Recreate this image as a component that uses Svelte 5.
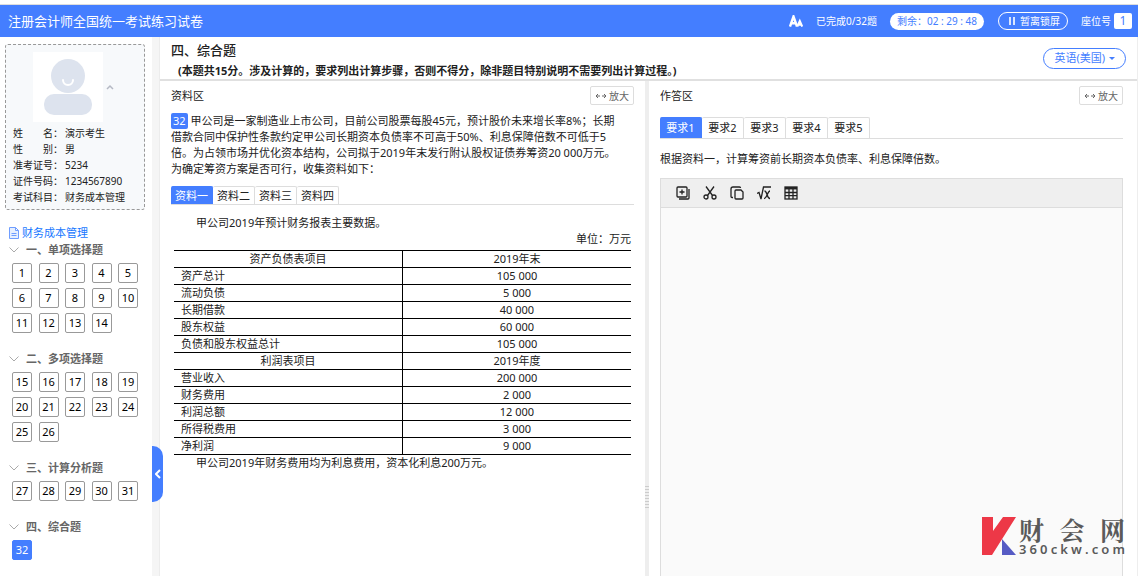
<script lang="ts">
	interface Section {
		title: string;
		from: number;
		to: number;
	}

	interface Row {
		name: string;
		value: string;
		head?: boolean;
	}

	const candidate = [
		{ label: ['姓', '名：'], value: '演示考生' },
		{ label: ['性', '别：'], value: '男' },
		{ label: ['准考证号：'], value: '5234' },
		{ label: ['证件号码：'], value: '1234567890' },
		{ label: ['考试科目：'], value: '财务成本管理' }
	];

	const sections: Section[] = [
		{ title: '一、单项选择题', from: 1, to: 14 },
		{ title: '二、多项选择题', from: 15, to: 26 },
		{ title: '三、计算分析题', from: 27, to: 31 },
		{ title: '四、综合题', from: 32, to: 32 }
	];

	const materials = ['资料一', '资料二', '资料三', '资料四'];
	const requirements = ['要求1', '要求2', '要求3', '要求4', '要求5'];

	const rows: Row[] = [
		{ name: '资产负债表项目', value: '2019年末', head: true },
		{ name: '资产总计', value: '105 000' },
		{ name: '流动负债', value: '5 000' },
		{ name: '长期借款', value: '40 000' },
		{ name: '股东权益', value: '60 000' },
		{ name: '负债和股东权益总计', value: '105 000' },
		{ name: '利润表项目', value: '2019年度', head: true },
		{ name: '营业收入', value: '200 000' },
		{ name: '财务费用', value: '2 000' },
		{ name: '利润总额', value: '12 000' },
		{ name: '所得税费用', value: '3 000' },
		{ name: '净利润', value: '9 000' }
	];

	let current = $state(32);
	let material = $state(0);
	let requirement = $state(0);

	function numbers(s: Section) {
		return Array.from({ length: s.to - s.from + 1 }, (_, i) => s.from + i);
	}
</script>

{#snippet zoomButton()}
	<button class="zoom-btn">
		<svg width="12" height="8" viewBox="0 0 12 8" fill="none" stroke="#666">
			<path d="M1 4h4M3 2L1 4l2 2M7 4h4M9 2l2 2-2 2" />
		</svg>
		放大
	</button>
{/snippet}

<div class="exam">
	<!-- Top bar -->
	<header class="topbar">
		<h1>注册会计师全国统一考试练习试卷</h1>
		<button class="font-btn" aria-label="字号">
			<svg width="14" height="12" viewBox="0 0 14 12" fill="none" stroke="#fff">
				<path stroke-width="2.400" d="M1 11.500L4.500 1.500L8 11.500M2.500 8.300h4" />
				<path stroke-width="2" d="M8.300 11.500L10.800 6L13.200 11.500M9 9.800h3.500" />
			</svg>
		</button>
		<span class="done">已完成0/32题</span>
		<span class="time">剩余：02 : 29 : 48</span>
		<button class="lock">
			<svg width="6" height="8" viewBox="0 0 6 8" fill="#fff">
				<rect x="0" y="0" width="2" height="8" opacity=".8" />
				<rect x="4" y="0" width="2" height="8" opacity=".8" />
			</svg>
			暂离锁屏
		</button>
		<span class="seat">座位号 <b>1</b></span>
	</header>

	<div class="body">
		<!-- Sidebar -->
		<aside class="sidebar">
			<div class="card">
				<div class="photo-row">
					<svg class="photo" width="70" height="70" viewBox="0 0 70 70">
						<rect width="70" height="70" fill="#fff" />
						<circle cx="35" cy="24" r="17" fill="#dde3ee" />
						<path d="M30 28a5 5 0 0 0 10 0" fill="none" stroke="#fff" stroke-width="2" stroke-linecap="round" />
						<rect x="11" y="42" width="48" height="21" rx="10" fill="#dde3ee" />
					</svg>
					<svg class="fold" width="8" height="6" viewBox="0 0 8 6" fill="none" stroke="#b5b9c4" stroke-width="1.500">
						<path d="M1 5l3-3 3 3" />
					</svg>
				</div>
				<dl>
					{#each candidate as c}
						<div class="info">
							<dt>
								{#each c.label as part}<span>{part}</span>{/each}
							</dt>
							<dd>{c.value}</dd>
						</div>
					{/each}
				</dl>
			</div>

			<a class="subject" href="#subject">
				<svg width="10" height="12" viewBox="0 0 10 12" fill="#e6efff" stroke="#6f9dff">
					<path d="M.5.5h6l3 3v8h-9zM6.500.5v3h3" />
					<path d="M2.500 6.500h5M2.500 8.500h5" />
				</svg>
				财务成本管理
			</a>

			{#each sections as s}
				<section class="group">
					<h2>
						<svg width="10" height="6" viewBox="0 0 10 6" fill="none" stroke="#aaa">
							<path d="M.5.5L5 5 9.500.5" />
						</svg>
						{s.title}
					</h2>
					<div class="numbers">
						{#each numbers(s) as n}
							<button class:active={n === current} onclick={() => (current = n)}>{n}</button>
						{/each}
					</div>
				</section>
			{/each}
		</aside>

		<div class="rail">
			<button class="collapse" aria-label="收起">
				<svg width="6" height="10" viewBox="0 0 6 10" fill="none" stroke="#fff" stroke-width="2">
					<path d="M5 1L1 5l4 4" />
				</svg>
			</button>
		</div>

		<main>
			<div class="intro">
				<div>
					<h2>四、综合题</h2>
					<p>(本题共15分。涉及计算的，要求列出计算步骤，否则不得分，除非题目特别说明不需要列出计算过程。)</p>
				</div>
				<button class="lang">
					英语(美国)
					<svg width="6" height="3" viewBox="0 0 6 3" fill="#447eff"><path d="M0 0h6L3 3z" /></svg>
				</button>
			</div>

			<div class="split">
				<!-- Materials -->
				<section class="pane">
					<div class="pane-head">
						<h3>资料区</h3>
						{@render zoomButton()}
					</div>
					<p class="question">
						<span class="badge">32</span>
						甲公司是一家制造业上市公司，目前公司股票每股45元，预计股价未来增长率8%；长期借款合同中保护性条款约定甲公司长期资本负债率不可高于50%、利息保障倍数不可低于5倍。为占领市场并优化资本结构，公司拟于2019年末发行附认股权证债券筹资20
						000万元。为确定筹资方案是否可行，收集资料如下：
					</p>
					<div class="tabs">
						{#each materials as m, i}
							<button class:active={i === material} onclick={() => (material = i)}>{m}</button>
						{/each}
					</div>
					<div class="material">
						<p class="indent">甲公司2019年预计财务报表主要数据。</p>
						<p class="unit">单位：万元</p>
						<table>
							<tbody>
								{#each rows as r}
									<tr>
										<td class:center={r.head}>{r.name}</td>
										<td class="center">{r.value}</td>
									</tr>
								{/each}
							</tbody>
						</table>
						<p class="indent">甲公司2019年财务费用均为利息费用，资本化利息200万元。</p>
					</div>
				</section>

				<div class="gutter"><span></span></div>

				<!-- Answer -->
				<section class="pane answer">
					<div class="pane-head">
						<h3>作答区</h3>
						{@render zoomButton()}
					</div>
					<div class="tabs tall">
						{#each requirements as r, i}
							<button class:active={i === requirement} onclick={() => (requirement = i)}>{r}</button>
						{/each}
					</div>
					<p class="task">根据资料一，计算筹资前长期资本负债率、利息保障倍数。</p>
					<div class="editor">
						<div class="toolbar">
							<button aria-label="复制">
								<svg width="14" height="14" viewBox="0 0 14 14" fill="none" stroke="#222" stroke-width="1.300">
									<rect x="1" y="1" width="10" height="10" rx="1" />
									<path d="M6 3.500v5M3.500 6h5M13 3v9a1 1 0 0 1-1 1H3" />
								</svg>
							</button>
							<button aria-label="剪切">
								<svg width="14" height="14" viewBox="0 0 14 14" fill="none" stroke="#222" stroke-width="1.300">
									<path d="M3 .5l6.500 9M11 .5l-6.500 9" />
									<circle cx="3" cy="11" r="2" />
									<circle cx="11" cy="11" r="2" />
								</svg>
							</button>
							<button aria-label="粘贴">
								<svg width="14" height="14" viewBox="0 0 14 14" fill="none" stroke="#222" stroke-width="1.300">
									<path d="M3 11.500H2a1 1 0 0 1-1-1V3a2 2 0 0 1 2-2h6.500a1 1 0 0 1 1 1" />
									<path d="M6 4h5l2 2v6a1 1 0 0 1-1 1H6a1 1 0 0 1-1-1V5a1 1 0 0 1 1-1z" />
								</svg>
							</button>
							<button aria-label="公式">
								<svg width="14" height="14" viewBox="0 0 14 14" fill="none" stroke="#222" stroke-width="1.300">
									<path d="M0 7.500l2-1L4 13 6.500 1H14M7.500 5c3 0 2 7.500 5.500 7.500M13 5c-2.500 0-3 7.500-6 7.500" />
								</svg>
							</button>
							<button aria-label="表格">
								<svg width="14" height="14" viewBox="0 0 14 14" fill="none" stroke="#222" stroke-width="1.300">
									<rect x="1" y="1" width="12" height="12" />
									<path stroke-width="2.500" d="M1 2.200h12" />
									<path d="M1 6.500h12M1 9.700h12M5 3v10M9 3v10" />
								</svg>
							</button>
						</div>
						<textarea aria-label="作答内容"></textarea>
					</div>
				</section>
			</div>
		</main>
	</div>

	<!-- Site mark -->
	<div class="mark">
		<svg width="34" height="38" viewBox="0 0 34 38">
			<path fill="#ed3847" d="M0 0h11v14L21 0h13L10 38H0z" />
			<path fill="#565bc4" d="M20 22l14 16H20z" />
		</svg>
		<div class="mark-text">
			<div class="mark-name">{#each '财会网' as ch}<span>{ch}</span>{/each}</div>
			<div class="mark-url">{#each '360ckw.com' as ch}<span>{ch}</span>{/each}</div>
		</div>
	</div>
</div>

<style>
	:global(body) {
		margin: 0;
	}

	.exam {
		display: flex;
		flex-direction: column;
		height: 100vh;
		overflow: hidden;
		position: relative;
		background: #fff;
		color: #212121;
		font-family: 'Noto Sans', 'Noto Sans CJK SC', sans-serif;
		font-size: 11px;
		line-height: 16px;
	}

	h1,
	h2,
	h3,
	p,
	dl,
	dd {
		margin: 0;
	}

	button {
		box-sizing: border-box;
		padding: 0;
		font: inherit;
		color: inherit;
		background: none;
		border: none;
		cursor: pointer;
		white-space: nowrap;
	}

	svg {
		flex-shrink: 0;
	}

	/* Top bar */
	.topbar {
		display: flex;
		align-items: center;
		flex-shrink: 0;
		height: 32px;
		margin-top: 4px;
		padding: 0 6px 0 8px;
		border-top: 1px solid #ddd;
		background: #447eff;
		color: #fff;
		font-size: 10px;
	}

	h1 {
		flex: 1;
		font-size: 13px;
		font-weight: 400;
	}

	.font-btn {
		display: flex;
		margin-right: 13px;
	}

	.time {
		margin: 0 14px 0 13px;
		padding: 0 7px;
		border-radius: 9px;
		background: #fff;
		color: #447eff;
		line-height: 17px;
	}

	.lock {
		display: flex;
		align-items: center;
		gap: 5px;
		height: 18px;
		margin-right: 13px;
		padding: 0 7px 0 10px;
		border: 1px solid #fff;
		border-radius: 9px;
	}

	.seat {
		display: flex;
		align-items: center;
		gap: 3px;
	}

	.seat b {
		width: 18px;
		border-radius: 2px;
		background: #fff;
		color: #447eff;
		font-size: 12px;
		font-weight: 400;
		text-align: center;
	}

	.body {
		display: flex;
		flex: 1;
		min-height: 0;
	}

	/* Sidebar */
	.sidebar {
		box-sizing: border-box;
		width: 152px;
		flex-shrink: 0;
		padding: 7px 7px 0 5px;
	}

	.card {
		padding: 7px 7px 4px;
		border: 1px dashed #999;
		border-radius: 3px;
		background: #f7f9fb;
		font-size: 10px;
	}

	.photo-row {
		display: flex;
		align-items: center;
		gap: 3px;
		margin: 0 0 3px 20px;
	}

	.info {
		display: flex;
	}

	dt {
		display: flex;
		justify-content: space-between;
		width: 50px;
		margin-right: 2px;
	}

	.subject {
		display: flex;
		align-items: center;
		gap: 3px;
		margin: 15px 0 1px 4px;
		color: #1677ff;
		text-decoration: none;
	}

	.group {
		margin: 0 7px 18px 4px;
	}

	.group h2 {
		display: flex;
		align-items: center;
		gap: 7px;
		color: #666;
		font-size: 11px;
		font-weight: 700;
	}

	.numbers {
		display: grid;
		grid-template-columns: repeat(5, 20px);
		justify-content: space-between;
		row-gap: 5px;
		margin: 5px 0 0 3px;
	}

	.numbers button {
		height: 20px;
		border: 1px solid #999;
		border-radius: 2px;
		color: #000;
		line-height: 18px;
	}

	.numbers .active {
		border-color: #447eff;
		background: #447eff;
		color: #fff;
	}

	.rail {
		position: relative;
		box-sizing: border-box;
		width: 8px;
		flex-shrink: 0;
		border-right: 1px solid #ececec;
		background: #f5f5f5;
	}

	.collapse {
		position: absolute;
		top: 409px;
		left: 0;
		z-index: 1;
		display: flex;
		align-items: center;
		justify-content: center;
		width: 11px;
		height: 56px;
		border-radius: 0 10px 10px 0;
		background: #447eff;
	}

	/* Main */
	main {
		display: flex;
		flex-direction: column;
		flex: 1;
		min-width: 0;
		border-right: 1px solid #eee;
	}

	.intro {
		display: flex;
		align-items: center;
		justify-content: space-between;
		padding: 4px 11px 0;
		border-bottom: 2px solid #e0e0e0;
	}

	.intro h2 {
		font-size: 13px;
		font-weight: 500;
		line-height: 18px;
	}

	.intro p {
		margin-top: 4px;
		padding-left: 7px;
		font-weight: 700;
	}

	.lang {
		display: flex;
		align-items: center;
		gap: 4px;
		height: 21px;
		margin-bottom: 4px;
		padding: 0 10px;
		border: 1px solid #447eff;
		border-radius: 11px;
		color: #447eff;
	}

	.split {
		display: flex;
		flex: 1;
		min-height: 0;
	}

	.pane {
		box-sizing: border-box;
		display: flex;
		flex-direction: column;
		flex: 1 1 0;
		min-width: 0;
		padding: 5px 11px 0;
	}

	.answer {
		padding-right: 14px;
	}

	.pane-head {
		display: flex;
		align-items: center;
		justify-content: space-between;
	}

	h3 {
		font-size: 11px;
		font-weight: 400;
	}

	.zoom-btn {
		display: flex;
		align-items: center;
		gap: 2px;
		height: 19px;
		padding: 0 4px;
		border: 1px solid #ddd;
		border-radius: 2px;
		color: #666;
		font-size: 10px;
	}

	.question {
		margin-top: 8px;
		padding-right: 10px;
	}

	.badge {
		display: inline-block;
		padding: 0 2px;
		border-radius: 2px;
		background: #447eff;
		color: #fff;
	}

	.tabs {
		display: flex;
		margin-top: 9px;
		border-bottom: 1px solid #ddd;
	}

	.tabs button {
		width: 42px;
		height: 18px;
		border: 1px solid #ddd;
		border-left-width: 0;
		border-bottom: none;
		border-radius: 2px 2px 0 0;
	}

	.tabs .active {
		border-color: #447eff;
		background: #447eff;
		color: #fff;
	}

	.tall {
		margin-top: 12px;
	}

	.tall button {
		height: 21px;
	}

	.material {
		padding: 10px 3px 0;
	}

	.indent {
		text-indent: 2em;
	}

	.unit {
		text-align: right;
	}

	table {
		width: 100%;
		margin-top: 3px;
		border-collapse: collapse;
		table-layout: fixed;
	}

	td {
		height: 16px;
		padding: 0 0 0 7px;
		border: solid #000;
		border-width: 1px 0;
	}

	td + td {
		border-left-width: 1px;
	}

	.center {
		padding: 0;
		text-align: center;
	}

	.gutter {
		display: flex;
		align-items: center;
		width: 4px;
		flex-shrink: 0;
		background: #eee;
	}

	.gutter span {
		width: 4px;
		height: 22px;
		margin-top: 336px;
		background: repeating-linear-gradient(#ccc 0 1px, #eee 1px 3px);
	}

	.task {
		margin-top: 12px;
	}

	.editor {
		display: flex;
		flex-direction: column;
		flex: 1;
		margin-top: 11px;
		border: 1px solid #ddd;
		border-bottom: none;
	}

	.toolbar {
		display: flex;
		gap: 13px;
		padding: 7px 15px;
		border-bottom: 1px solid #ddd;
		background: #efefef;
	}

	.toolbar button {
		display: flex;
	}

	textarea {
		flex: 1;
		padding: 8px;
		border: none;
		outline: none;
		resize: none;
		background: #fafafa;
		font: inherit;
	}

	/* Site mark */
	.mark {
		position: absolute;
		right: 13px;
		bottom: 20px;
		display: flex;
		align-items: center;
		gap: 3px;
		color: #5a5a5a;
	}

	.mark-text {
		width: 106px;
	}

	.mark-name,
	.mark-url {
		display: flex;
		justify-content: space-between;
	}

	.mark-name {
		font-family: 'Noto Serif CJK SC', 'Noto Sans CJK SC', serif;
		font-size: 25px;
		font-weight: 700;
		line-height: 26px;
	}

	.mark-url {
		font-size: 13px;
		font-weight: 600;
		line-height: 14px;
	}
</style>
